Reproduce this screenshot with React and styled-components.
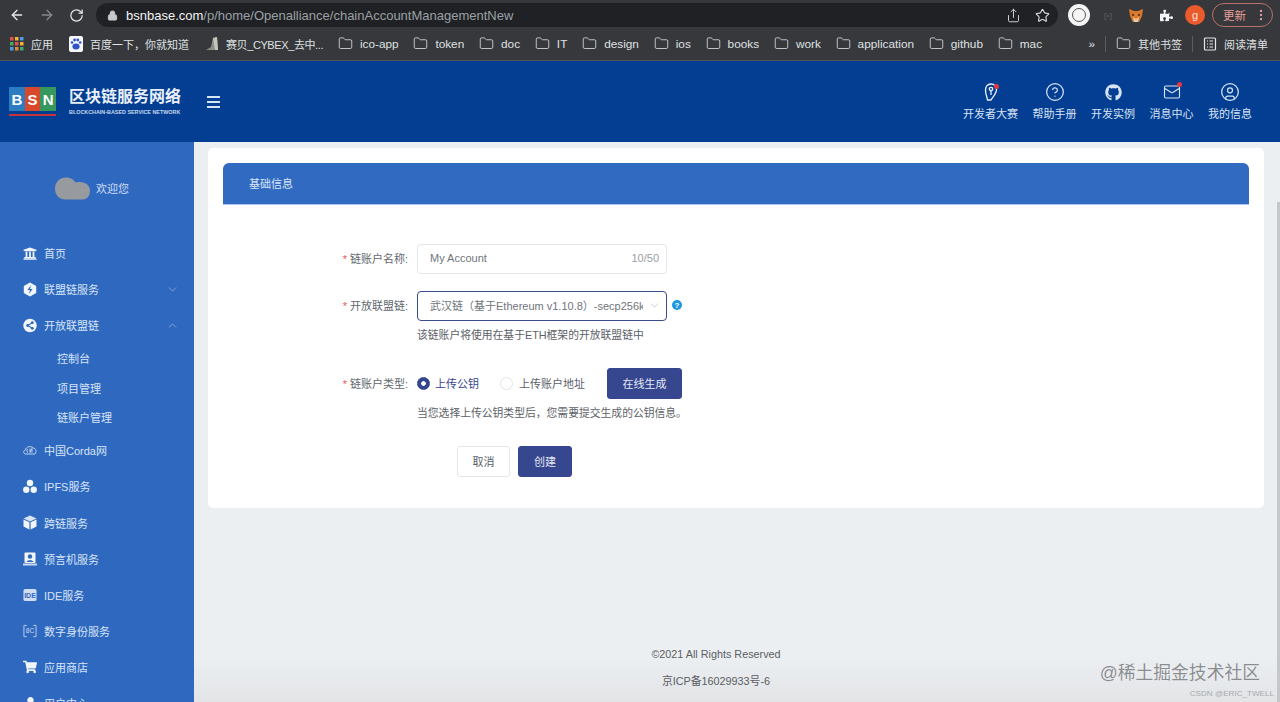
import React from "react";
import styled, { createGlobalStyle } from "styled-components";
import { ArrowLeft, ArrowRight, RotateCw, Lock, Share, Star, Folder, ChevronDown, ChevronUp, EllipsisVertical, CircleHelp, Mail, CircleUser } from "lucide-react";
import { FaGithub, FaUniversity, FaShoppingCart, FaPuzzlePiece, FaUser } from "react-icons/fa";

const FONT = `"Liberation Sans", "Noto Sans CJK SC", sans-serif`;

const GlobalStyle = createGlobalStyle`
  html, body { margin: 0; padding: 0; height: 100%; overflow: hidden; }
  body { font-family: ${FONT}; font-size: 11px; }
  * { box-sizing: border-box; }
`;

const Page = styled.div`
  height: 702px;
  display: flex;
  flex-direction: column;
  overflow: hidden;
  position: relative;
`;

/* browser chrome */
const TopBar = styled.div`
  height: 30px;
  background: #37383b;
  display: flex;
  align-items: flex-start;
  padding: 3px 7px 0 8px;
  color: #e6e7e9;
`;

const NavIcons = styled.div`
  width: 88px;
  height: 24px;
  display: flex;
  align-items: center;
  gap: 14px;
  padding-left: 1px;
`;

const AddressBar = styled.div`
  width: 962px;
  height: 24px;
  background: #202124;
  border-radius: 12px;
  display: flex;
  align-items: center;
  padding: 0 8px 0 11px;
  font-size: 13px;
  color: #9aa0a6;
`;

const Host = styled.span`
  color: #f1f3f4;
  margin-left: 8px;
`;

const AddressEnd = styled.div`
  margin-left: auto;
  display: flex;
  align-items: center;
  gap: 14px;
  color: #d6d8da;
`;

const Extensions = styled.div`
  flex: 1;
  height: 24px;
  display: flex;
  align-items: center;
  padding-left: 10px;
`;

const WhiteDot = styled.div`
  width: 22px;
  height: 22px;
  border-radius: 50%;
  background: #f5f5f5;
  display: flex;
  align-items: center;
  justify-content: center;
  &::after {
    content: "";
    width: 12px;
    height: 12px;
    border-radius: 50%;
    border: 1.5px solid #555;
  }
`;

const TinyMark = styled.span`
  width: 14px;
  margin-left: 11px;
  color: #555;
  font-size: 8px;
  font-weight: 700;
  text-align: center;
`;

const ExtSlot = styled.div`
  display: flex;
  margin-left: ${({ $left }) => $left}px;
`;

const ProfileDot = styled.div`
  width: 20px;
  height: 20px;
  margin-left: 12px;
  border-radius: 50%;
  background: #ea5a2c;
  color: #fbe3d8;
  font-size: 11px;
  display: flex;
  align-items: center;
  justify-content: center;
`;

const UpdatePill = styled.div`
  width: 61px;
  height: 24px;
  margin-left: 7px;
  border: 1px solid #b9716c;
  border-radius: 12px;
  color: #e79f97;
  font-size: 11.5px;
  display: flex;
  align-items: center;
  justify-content: space-between;
  padding: 0 4px 0 10px;
`;

const BookmarkBar = styled.div`
  height: 31px;
  background: #37383b;
  border-bottom: 1px solid #4f5358;
  display: flex;
  align-items: center;
  padding: 0 12px 3px 10px;
  gap: 14.8px;
  color: #dfe1e3;
`;

const Bookmark = styled.div`
  display: flex;
  align-items: center;
  gap: 7px;
  font-size: ${({ $cjk }) => ($cjk ? 11 : 11.8)}px;
  letter-spacing: ${({ $track }) => $track || 0}px;
  white-space: nowrap;
  margin-right: ${({ $after }) => $after || 0}px;
`;

const BookmarkEnd = styled.div`
  margin-left: auto;
  display: flex;
  align-items: center;
  gap: 10px;
`;

const Separator = styled.span`
  width: 1px;
  height: 16px;
  background: #5a5d61;
`;

/* site header */
const SiteHeader = styled.header`
  height: 81px;
  background: #033e93;
  display: flex;
  align-items: center;
  padding: 0 28px 0 9px;
  color: #fff;
`;

const Brand = styled.div`
  display: flex;
  align-items: center;
  gap: 13px;
`;

const LogoMark = styled.div`
  width: 47px;
  height: 29px;
  display: flex;
  border-bottom: 2px solid #c8323c;
  padding-bottom: 3px;
`;

const LogoTile = styled.span`
  flex: 1;
  background: ${({ $bg }) => $bg};
  color: #fff;
  font-size: 15px;
  font-weight: 700;
  display: flex;
  align-items: center;
  justify-content: center;
`;

const BrandText = styled.div`
  display: flex;
  flex-direction: column;
  gap: 3px;
`;

const BrandName = styled.div`
  font-size: 16px;
  line-height: 19px;
  font-weight: 700;
  color: #e9f0fa;
`;

const BrandSub = styled.div`
  font-size: 5.4px;
  line-height: 7px;
  font-weight: 700;
  color: #c6d6ee;
  white-space: nowrap;
`;

const Burger = styled.div`
  width: 13px;
  margin: 1px 0 0 26px;
  display: flex;
  flex-direction: column;
  gap: 3px;
  span {
    height: 2px;
    background: #d7e4f6;
  }
`;

const HeaderNav = styled.nav`
  margin-left: auto;
  display: flex;
  gap: 14.5px;
  margin-top: 1px;
`;

const HeaderItem = styled.div`
  position: relative;
  display: flex;
  flex-direction: column;
  align-items: center;
  gap: 4px;
  font-size: 11px;
  line-height: 16px;
  color: #d9e3f2;
`;

const HeaderIcon = styled.span`
  height: 20px;
  display: flex;
  align-items: center;
`;

const RedDot = styled.span`
  position: absolute;
  top: ${({ $top }) => $top}px;
  left: ${({ $left }) => $left}%;
  width: 5px;
  height: 5px;
  border-radius: 50%;
  background: #e8353f;
`;

/* body */
const Body = styled.div`
  flex: 1;
  min-height: 0;
  display: flex;
`;

const Sidebar = styled.aside`
  width: 194px;
  flex-shrink: 0;
  background: #2f69bf;
  color: #d8e4f6;
  overflow: hidden;
`;

const Welcome = styled.div`
  height: 93px;
  padding: 0 0 1px 55px;
  display: flex;
  align-items: center;
  gap: 6px;
  color: #d0def3;
`;

const MenuRow = styled.div`
  height: 36.2px;
  padding: 0 15px 0 23px;
  display: flex;
  align-items: center;
  gap: 7px;
  color: #d8e4f6;
`;

const MenuIcon = styled.span`
  width: 14px;
  height: 16px;
  display: flex;
  align-items: center;
  justify-content: center;
  color: #f1f5fc;
  flex-shrink: 0;
`;

const MenuArrow = styled.span`
  margin-left: auto;
  display: flex;
  color: #a9c3ea;
`;

const SubRow = styled.div`
  height: 29.5px;
  padding-left: 57px;
  display: flex;
  align-items: center;
  color: #d8e4f6;
`;

const Main = styled.main`
  flex: 1;
  min-width: 0;
  position: relative;
  display: flex;
  flex-direction: column;
  padding: 6px 16px 7px 14px;
  background: linear-gradient(to bottom, #eceff2 92%, #e2e4e6 100%);
`;

const Card = styled.section`
  height: 360px;
  background: #fff;
  border-radius: 5px;
  padding: 15px;
`;

const CardTitle = styled.div`
  height: 42px;
  background: #316bc1;
  border-radius: 6px 6px 0 0;
  border-bottom: 1px solid #a9c6ee;
  padding: 0 0 2px 26px;
  display: flex;
  align-items: center;
  color: #dbe6f7;
`;

const Form = styled.form`
  display: flex;
  flex-direction: column;
  margin-top: 39px;
`;

const FormRow = styled.div`
  display: flex;
  align-items: center;
  min-height: 30px;
  margin-top: ${({ $top }) => $top || 0}px;
`;

const Label = styled.label`
  width: 185px;
  padding-bottom: 2px;
  text-align: right;
  color: #62676e;
  white-space: nowrap;
  &::before {
    content: "*";
    color: #e85a5a;
    margin-right: 3px;
  }
`;

const Control = styled.div`
  margin-left: 9px;
  display: flex;
  align-items: center;
`;

const InputBox = styled.div`
  width: 250px;
  height: 30px;
  border: 1px solid ${({ $active }) => ($active ? "#3a4a8f" : "#e3e6ea")};
  border-radius: 4px;
  padding: 0 ${({ $active }) => ($active ? 5 : 7)}px 2px 12px;
  display: flex;
  align-items: center;
  color: #70757c;
  background: #fff;
`;

const InputText = styled.span`
  flex: 1;
  min-width: 0;
  margin-right: ${({ $clip }) => $clip || 0}px;
  overflow: hidden;
  white-space: nowrap;
`;

const Counter = styled.span`
  color: #9a9ea4;
`;

const HelpDot = styled.span`
  width: 10px;
  height: 10px;
  margin: 0 0 2px 5px;
  border-radius: 50%;
  background: #1f96e0;
  color: #fff;
  font-size: 8px;
  font-weight: 700;
  display: flex;
  align-items: center;
  justify-content: center;
`;

const Hint = styled.div`
  margin: ${({ $top }) => $top}px 0 0 194px;
  font-size: 10.8px;
  line-height: 20px;
  color: #5c6168;
  white-space: nowrap;
`;

const Radio = styled.span`
  width: 13px;
  height: 13px;
  border-radius: 50%;
  background: ${({ $on }) => ($on ? "radial-gradient(circle, #fff 0 2px, #34458f 2.6px)" : "#fff")};
  border: 1px solid ${({ $on }) => ($on ? "#34458f" : "#e1e3e6")};
`;

const RadioOption = styled.div`
  display: flex;
  align-items: center;
  gap: ${({ $on }) => ($on ? 5 : 6)}px;
  margin-right: ${({ $gap }) => $gap}px;
  padding-bottom: 1px;
  color: ${({ $on }) => ($on ? "#34458f" : "#5c6168")};
`;

const Button = styled.button`
  height: 31px;
  width: ${({ $w }) => $w}px;
  border-radius: 3px;
  border: 1px solid ${({ $plain }) => ($plain ? "#e3e6ea" : "#36468f")};
  background: ${({ $plain }) => ($plain ? "#fff" : "#36468f")};
  color: ${({ $plain }) => ($plain ? "#5c6168" : "#e4e8f4")};
  font-family: ${FONT};
  font-size: 11px;
  padding: 0 0 2px;
`;

const Actions = styled.div`
  display: flex;
  gap: 8px;
  margin: 23px 0 0 234px;
`;

const Footer = styled.footer`
  margin-top: auto;
  padding-right: 40px;
  text-align: center;
  font-size: 10.8px;
  line-height: 27px;
  color: #5a5e63;
`;

const ScrollThumb = styled.div`
  position: absolute;
  right: 0;
  top: 60px;
  bottom: 0;
  width: 3px;
  background: #c6c7c8;
`;

const Watermark = styled.div`
  position: absolute;
  right: 20px;
  bottom: 17px;
  font-size: 17.8px;
  line-height: 24px;
  color: #8a8d90;
  text-shadow: 0 0 1px #fff;
`;

const Credit = styled.div`
  position: absolute;
  right: 6px;
  bottom: 2px;
  font-size: 8.1px;
  line-height: 12px;
  color: #a6aaae;
`;

const AppsIcon = () => (
  <svg width="14" height="14" viewBox="0 0 14 14">
    {[0, 5, 10].map((y, r) =>
      [0, 5, 10].map((x, c) => (
        <rect key={`${r}${c}`} x={x} y={y} width="3.5" height="3.5" fill={["#e0524a", "#f2b632", "#4a9be8", "#45a866", "#e0524a", "#f2b632", "#4a9be8", "#e08a3a", "#45a866"][r * 3 + c]} />
      ))
    )}
  </svg>
);

const BaiduIcon = () => (
  <svg width="14" height="16" viewBox="0 0 14 16">
    <rect width="14" height="16" rx="2" fill="#f5f7fc" />
    <ellipse cx="7" cy="10.5" rx="3.6" ry="3" fill="#2f53c9" />
    <circle cx="3" cy="6.5" r="1.3" fill="#2f53c9" />
    <circle cx="5.6" cy="4" r="1.4" fill="#2f53c9" />
    <circle cx="8.8" cy="4" r="1.4" fill="#2f53c9" />
    <circle cx="11.2" cy="6.5" r="1.3" fill="#2f53c9" />
  </svg>
);

const CybexIcon = () => (
  <svg width="14" height="16" viewBox="0 0 14 16">
    <path d="M1 14 L6 11 L8 2 L12 1 L13 14 Z" fill="#8e8e88" />
    <path d="M8 2 L10 14 L13 14 L12 1 Z" fill="#c5c5bd" />
  </svg>
);

const ReadIcon = () => (
  <svg width="14" height="14" viewBox="0 0 14 14" fill="none" stroke="#e4e6e8" strokeWidth="1.2">
    <rect x="1.5" y="1" width="11" height="12" rx="1" />
    <path d="M4 4h1M6.5 4h3.5M4 7h1M6.5 7h3.5M4 10h1M6.5 10h3.5" />
  </svg>
);

const FoxIcon = () => (
  <svg width="16" height="15" viewBox="0 0 16 15">
    <path d="M1 1 L6 3 H10 L15 1 L14 8 L11 14 H5 L2 8 Z" fill="#d9772c" />
    <path d="M5 9 L8 11 L11 9 L10 14 H6 Z" fill="#efc9a4" />
    <circle cx="5" cy="7" r="1" fill="#3a2a1c" />
    <circle cx="11" cy="7" r="1" fill="#3a2a1c" />
  </svg>
);

const ContestIcon = () => (
  <svg width="14" height="18" viewBox="0 0 14 18" fill="none" stroke="#e9f0fa" strokeWidth="1.3">
    <path d="M7 1 C3 1 1.5 4 1.5 7.5 C1.5 11 3 13.5 3.5 17 L7 17 C9.5 13 12.5 10.5 12.5 6.5 C12.5 3.5 10.5 1 7 1 Z" />
    <circle cx="7" cy="6" r="1.7" />
    <path d="M7 8v4" />
  </svg>
);

const HexBoltIcon = () => (
  <svg width="14" height="15" viewBox="0 0 14 15">
    <path d="M7 0.5 L13.2 4 V11 L7 14.5 L0.8 11 V4 Z" fill="#f1f5fc" />
    <path d="M8 3 L4.5 8 H7 L6 12 L9.5 7 H7 Z" fill="#2f69bf" />
  </svg>
);

const ShareCircleIcon = () => (
  <svg width="15" height="15" viewBox="0 0 15 15">
    <circle cx="7.5" cy="7.5" r="7.2" fill="#f1f5fc" />
    <path d="M10 4.5 L5 7.5 L10 10.5" stroke="#2f69bf" strokeWidth="1.1" fill="none" />
    <circle cx="10" cy="4.5" r="1.5" fill="#2f69bf" />
    <circle cx="5" cy="7.5" r="1.5" fill="#2f69bf" />
    <circle cx="10" cy="10.5" r="1.5" fill="#2f69bf" />
  </svg>
);

const CordaIcon = () => (
  <svg width="14" height="10" viewBox="0 0 14 10" fill="none" stroke="#cfdcf2" strokeWidth="0.9">
    <path d="M3 9 C0 9 0 5.5 2.5 5 C3 1.5 8 0.5 10 3 C13 3 14 7 12 9 Z" />
    <path d="M5 4 C3.5 4.5 3.5 7 5 7.5 M7 3.5 V7.5 L9 3.5 V7.5" />
  </svg>
);

const IpfsIcon = () => (
  <svg width="15" height="15" viewBox="0 0 15 15" fill="#f1f5fc">
    <circle cx="7.5" cy="3.8" r="3.4" />
    <circle cx="3.5" cy="11" r="3.4" />
    <circle cx="11.5" cy="11" r="3.4" />
  </svg>
);

const BoxIcon = () => (
  <svg width="14" height="15" viewBox="0 0 14 15">
    <path d="M7 0.5 L13.5 3.5 L7 6.5 L0.5 3.5 Z" fill="#d8e4f6" />
    <path d="M0.5 4.5 L6.4 7.3 V14.5 L0.5 11.6 Z" fill="#f1f5fc" />
    <path d="M13.5 4.5 L7.6 7.3 V14.5 L13.5 11.6 Z" fill="#f1f5fc" />
  </svg>
);

const OracleIcon = () => (
  <svg width="14" height="14" viewBox="0 0 14 14">
    <rect x="1.5" y="0.5" width="11" height="10.5" rx="1" fill="#f1f5fc" />
    <circle cx="7" cy="4.5" r="2.2" fill="#2f69bf" />
    <path d="M3.5 10 C4 7.5 10 7.5 10.5 10 Z" fill="#2f69bf" />
    <rect x="0" y="11.5" width="14" height="2" fill="#cfdcf2" />
  </svg>
);

const IdeIcon = () => (
  <svg width="15" height="14" viewBox="0 0 15 14">
    <rect x="0.5" y="0.5" width="14" height="13" rx="2" fill="#cfdcf2" />
    <text x="7.5" y="10" textAnchor="middle" fontSize="7.5" fontWeight="700" fontFamily="Liberation Sans" fill="#2f69bf">IDE</text>
  </svg>
);

const DidIcon = () => (
  <svg width="15" height="14" viewBox="0 0 15 14" fill="none" stroke="#cfdcf2" strokeWidth="0.9">
    <path d="M4 1H1V13H4M11 1H14V13H11" />
    <text x="7.5" y="9.5" textAnchor="middle" fontSize="7" fontFamily="Liberation Sans" fill="#cfdcf2" stroke="none">8C</text>
  </svg>
);

const CloudAvatar = () => (
  <svg width="35" height="23" viewBox="0 0 35 23">
    <path d="M11 0.5 C16 0.5 19 3 20.5 5.5 C23 4.5 35 4 35 14 C35 20 31 22.5 27 22.5 H11 C4 22.5 0 18 0 11.5 C0 5 5 0.5 11 0.5 Z" fill="#979a9e" />
  </svg>
);

const bookmarks = [
  { label: "应用", cjk: true, after: 1.2, icon: <AppsIcon /> },
  { label: "百度一下，你就知道", cjk: true, after: 1.2, icon: <BaiduIcon /> },
  { label: "赛贝_CYBEX_去中...", cjk: true, track: -0.4, icon: <CybexIcon /> },
  ...["ico-app", "token", "doc", "IT", "design", "ios", "books", "work", "application", "github", "mac"].map((label) => ({ label })),
];

const headerItems = [
  { label: "开发者大赛", icon: <ContestIcon />, dot: { top: 2, left: 56 } },
  { label: "帮助手册", icon: <CircleHelp size={20} strokeWidth={1.5} /> },
  { label: "开发实例", icon: <FaGithub size={17} /> },
  { label: "消息中心", icon: <Mail size={18} strokeWidth={1.5} />, dot: { top: 0, left: 62 } },
  { label: "我的信息", icon: <CircleUser size={20} strokeWidth={1.5} /> },
];

const menuTop = [
  { label: "首页", icon: <FaUniversity size={15} /> },
  { label: "联盟链服务", icon: <HexBoltIcon />, arrow: <ChevronDown size={13} strokeWidth={1.2} /> },
  { label: "开放联盟链", icon: <ShareCircleIcon />, arrow: <ChevronUp size={13} strokeWidth={1.2} /> },
];

const menuBottom = [
  { label: "中国Corda网", icon: <CordaIcon /> },
  { label: "IPFS服务", icon: <IpfsIcon /> },
  { label: "跨链服务", icon: <BoxIcon /> },
  { label: "预言机服务", icon: <OracleIcon /> },
  { label: "IDE服务", icon: <IdeIcon /> },
  { label: "数字身份服务", icon: <DidIcon /> },
  { label: "应用商店", icon: <FaShoppingCart size={14} /> },
  { label: "用户中心", icon: <FaUser size={13} /> },
];

const MenuItem = ({ item }) => (
  <MenuRow>
    <MenuIcon>{item.icon}</MenuIcon>
    {item.label}
    {item.arrow && <MenuArrow>{item.arrow}</MenuArrow>}
  </MenuRow>
);

export default function App() {
  return (
    <Page>
      <GlobalStyle />
      <TopBar>
        <NavIcons>
          <ArrowLeft size={16} />
          <ArrowRight size={16} color="#85878a" />
          <RotateCw size={15} />
        </NavIcons>
        <AddressBar>
          <Lock size={11} fill="#c6c8ca" color="#c6c8ca" />
          <Host>bsnbase.com</Host>/p/home/Openalliance/chainAccountManagementNew
          <AddressEnd>
            <Share size={15} strokeWidth={1.5} />
            <Star size={15} strokeWidth={1.8} />
          </AddressEnd>
        </AddressBar>
        <Extensions>
          <WhiteDot />
          <TinyMark>[•]</TinyMark>
          <ExtSlot $left={13}><FoxIcon /></ExtSlot>
          <ExtSlot $left={16}><FaPuzzlePiece size={13} color="#f1f3f4" /></ExtSlot>
          <ProfileDot>g</ProfileDot>
          <UpdatePill>
            更新
            <EllipsisVertical size={14} />
          </UpdatePill>
        </Extensions>
      </TopBar>
      <BookmarkBar>
        {bookmarks.map((b) => (
          <Bookmark key={b.label} $cjk={b.cjk} $after={b.after} $track={b.track}>
            {b.icon || <Folder size={15} strokeWidth={1.3} />}
            {b.label}
          </Bookmark>
        ))}
        <BookmarkEnd>
          <Bookmark>»</Bookmark>
          <Separator />
          <Bookmark $cjk>
            <Folder size={15} strokeWidth={1.3} />
            其他书签
          </Bookmark>
          <Separator />
          <Bookmark $cjk>
            <ReadIcon />
            阅读清单
          </Bookmark>
        </BookmarkEnd>
      </BookmarkBar>
      <SiteHeader>
        <Brand>
          <LogoMark>
            <LogoTile $bg="#2b7cc0">B</LogoTile>
            <LogoTile $bg="#d8492c">S</LogoTile>
            <LogoTile $bg="#36985c">N</LogoTile>
          </LogoMark>
          <BrandText>
            <BrandName>区块链服务网络</BrandName>
            <BrandSub>BLOCKCHAIN-BASED SERVICE NETWORK</BrandSub>
          </BrandText>
        </Brand>
        <Burger>
          <span />
          <span />
          <span />
        </Burger>
        <HeaderNav>
          {headerItems.map((item) => (
            <HeaderItem key={item.label}>
              <HeaderIcon>{item.icon}</HeaderIcon>
              {item.dot && <RedDot $top={item.dot.top} $left={item.dot.left} />}
              {item.label}
            </HeaderItem>
          ))}
        </HeaderNav>
      </SiteHeader>
      <Body>
        <Sidebar>
          <Welcome>
            <CloudAvatar />
            欢迎您
          </Welcome>
          {menuTop.map((item) => (
            <MenuItem key={item.label} item={item} />
          ))}
          <div>
            <SubRow>控制台</SubRow>
            <SubRow>项目管理</SubRow>
            <SubRow>链账户管理</SubRow>
          </div>
          {menuBottom.map((item) => (
            <MenuItem key={item.label} item={item} />
          ))}
        </Sidebar>
        <Main>
          <Card>
            <CardTitle>基础信息</CardTitle>
            <Form>
              <FormRow>
                <Label>链账户名称:</Label>
                <Control>
                  <InputBox>
                    <InputText>My Account</InputText>
                    <Counter>10/50</Counter>
                  </InputBox>
                </Control>
              </FormRow>
              <FormRow $top={17}>
                <Label>开放联盟链:</Label>
                <Control>
                  <InputBox $active>
                    <InputText $clip={5}>武汉链（基于Ethereum v1.10.8）-secp256k1</InputText>
                    <ChevronDown size={13} strokeWidth={1} color="#a4a8ae" />
                  </InputBox>
                  <HelpDot>?</HelpDot>
                </Control>
              </FormRow>
              <Hint $top={4}>该链账户将使用在基于ETH框架的开放联盟链中</Hint>
              <FormRow $top={23}>
                <Label>链账户类型:</Label>
                <Control>
                  <RadioOption $on $gap={21}>
                    <Radio $on />
                    上传公钥
                  </RadioOption>
                  <RadioOption $gap={22}>
                    <Radio />
                    上传账户地址
                  </RadioOption>
                  <Button type="button" $w={75}>在线生成</Button>
                </Control>
              </FormRow>
              <Hint $top={4}>当您选择上传公钥类型后，您需要提交生成的公钥信息。</Hint>
              <Actions>
                <Button type="button" $plain $w={53}>取消</Button>
                <Button type="button" $w={54}>创建</Button>
              </Actions>
            </Form>
          </Card>
          <Footer>
            <div>©2021 All Rights Reserved</div>
            <div>京ICP备16029933号-6</div>
          </Footer>
          <ScrollThumb />
          <Watermark>@稀土掘金技术社区</Watermark>
          <Credit>CSDN @ERIC_TWELL</Credit>
        </Main>
      </Body>
    </Page>
  );
}
